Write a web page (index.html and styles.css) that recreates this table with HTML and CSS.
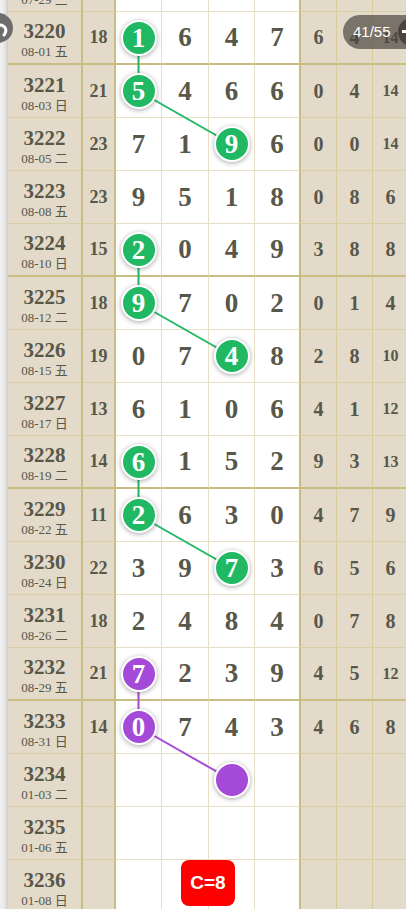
FILE: index.html
```html
<!DOCTYPE html>
<html lang="zh">
<head>
    <meta charset="UTF-8">
    <meta name="viewport" content="width=device-width, initial-scale=1.0">
    <title>走势图</title>
    <link rel="stylesheet" href="styles.css">
</head>
<body>
<div class="page">
    <div class="board" id="board">
        <svg class="links" id="links"></svg>
    </div>

    <div class="nav-back">
        <svg viewBox="0 0 30 30" width="30" height="30">
            <circle cx="15" cy="15" r="15" fill="#6d6d6d"/>
            <path d="M16 12 C 22 12, 25 17, 21 22" fill="none" stroke="#fff" stroke-width="3" stroke-linecap="round"/>
        </svg>
    </div>

    <div class="counter">
        <span>41/55</span>
        <i class="counter-close"></i>
    </div>

    <div class="badge">C=8</div>
</div>

<script>
    // draw data
    const rows = [
        { no: '3219', date: '07-29 三', sum: '16', nums: [3, 5, 2, 6], stats: [1, 3, 12] },
        { no: '3220', date: '08-01 五', sum: '18', nums: [1, 6, 4, 7], stats: [6, 4, 14], ball: 0, g: 1, split: true },
        { no: '3221', date: '08-03 日', sum: '21', nums: [5, 4, 6, 6], stats: [0, 4, 14], ball: 0, g: 1 },
        { no: '3222', date: '08-05 二', sum: '23', nums: [7, 1, 9, 6], stats: [0, 0, 14], ball: 2, g: 1 },
        { no: '3223', date: '08-08 五', sum: '23', nums: [9, 5, 1, 8], stats: [0, 8, 6] },
        { no: '3224', date: '08-10 日', sum: '15', nums: [2, 0, 4, 9], stats: [3, 8, 8], ball: 0, g: 2, split: true },
        { no: '3225', date: '08-12 二', sum: '18', nums: [9, 7, 0, 2], stats: [0, 1, 4], ball: 0, g: 2 },
        { no: '3226', date: '08-15 五', sum: '19', nums: [0, 7, 4, 8], stats: [2, 8, 10], ball: 2, g: 2 },
        { no: '3227', date: '08-17 日', sum: '13', nums: [6, 1, 0, 6], stats: [4, 1, 12] },
        { no: '3228', date: '08-19 二', sum: '14', nums: [6, 1, 5, 2], stats: [9, 3, 13], ball: 0, g: 3, split: true },
        { no: '3229', date: '08-22 五', sum: '11', nums: [2, 6, 3, 0], stats: [4, 7, 9], ball: 0, g: 3 },
        { no: '3230', date: '08-24 日', sum: '22', nums: [3, 9, 7, 3], stats: [6, 5, 6], ball: 2, g: 3 },
        { no: '3231', date: '08-26 二', sum: '18', nums: [2, 4, 8, 4], stats: [0, 7, 8] },
        { no: '3232', date: '08-29 五', sum: '21', nums: [7, 2, 3, 9], stats: [4, 5, 12], ball: 0, g: 4, purple: true, split: true },
        { no: '3233', date: '08-31 日', sum: '14', nums: [0, 7, 4, 3], stats: [4, 6, 8], ball: 0, g: 4, purple: true },
        { no: '3234', date: '01-03 二', ball: 2, g: 4, purple: true },
        { no: '3235', date: '01-06 五' },
        { no: '3236', date: '01-08 日' }
    ];

    const board = document.getElementById('board');

    rows.forEach(r => {
        const row = document.createElement('div');
        row.className = 'row' + (r.split ? ' split' : '');
        let html = `<div class="cell c-issue"><b>${r.no}</b><small>${r.date}</small></div>`;
        html += `<div class="cell c-sum">${r.sum || ''}</div>`;
        for (let i = 0; i < 4; i++) {
            const n = r.nums ? r.nums[i] : '';
            if (r.ball === i) {
                html += `<div class="cell c-num"><span class="ball${r.purple ? ' purple' : ''}" data-g="${r.g}">${n}</span></div>`;
            } else {
                html += `<div class="cell c-num">${n}</div>`;
            }
        }
        for (let i = 0; i < 3; i++) {
            const s = r.stats ? r.stats[i] : '';
            html += `<div class="cell c-stat${s >= 10 ? ' two' : ''}">${s}</div>`;
        }
        row.innerHTML = html;
        board.appendChild(row);
    });

    // connect balls of the same group
    const svg = document.getElementById('links');
    const box = board.getBoundingClientRect();
    const groups = {};
    document.querySelectorAll('.ball').forEach(b => {
        (groups[b.dataset.g] = groups[b.dataset.g] || []).push(b);
    });
    Object.values(groups).forEach(list => {
        for (let i = 1; i < list.length; i++) {
            const a = list[i - 1].getBoundingClientRect();
            const b = list[i].getBoundingClientRect();
            const line = document.createElementNS('http://www.w3.org/2000/svg', 'line');
            line.setAttribute('x1', a.left + a.width / 2 - box.left);
            line.setAttribute('y1', a.top + a.height / 2 - box.top);
            line.setAttribute('x2', b.left + b.width / 2 - box.left);
            line.setAttribute('y2', b.top + b.height / 2 - box.top);
            line.setAttribute('class', list[i].classList.contains('purple') ? 'purple' : '');
            svg.appendChild(line);
        }
    });
</script>
</body>
</html>
```

FILE: styles.css
```css
body {
    margin: 0;
    background-color: #efefef;
    font-family: "Liberation Serif", "Noto Sans CJK SC", serif;
    color: #57574a;
    overflow: hidden;
}

.page {
    position: relative;
    height: 909px;
    overflow: hidden;
}

.board {
    position: relative;
    width: 401px;
    margin: -41px 0 0 8px;
    background-color: #e3dac9;
    box-shadow: 0 0 6px rgba(0, 0, 0, 0.3);
}

.row {
    display: grid;
    grid-template-columns: 75px 33px 46px 47px 46px 46px 36px 36px 36px;
    height: 53px;
}

.cell {
    box-sizing: border-box;
    display: flex;
    align-items: center;
    justify-content: center;
    border-bottom: 1px solid #d8cfa6;
    font-weight: bold;
}

.row.split .cell {
    border-bottom: 2px solid #c9bd84;
}

.c-issue {
    flex-direction: column;
    padding-top: 7px;
    border-right: 2px solid #c9bd84;
}

.c-issue b {
    font-size: 21px;
    line-height: 22px;
}

.c-issue small {
    font-size: 13px;
    line-height: 20px;
    font-weight: normal;
}

.c-sum {
    font-size: 18px;
    border-right: 2px solid #c9bd84;
}

.c-num {
    background-color: #ffffff;
    font-size: 27px;
    border-right: 1px solid #e6dfc4;
    border-bottom-color: #e6dfc4;
}

.c-num:nth-child(6) {
    border-right: 2px solid #c9bd84;
}

.c-stat {
    font-size: 20px;
    border-right: 1px solid #d8cc9a;
}

.c-stat.two {
    font-size: 16px;
}

.ball {
    position: relative;
    z-index: 2;
    box-sizing: border-box;
    width: 36px;
    height: 36px;
    border-radius: 50%;
    border: 2px solid #ffffff;
    background-color: #21b864;
    color: #ffffff;
    font-size: 27px;
    line-height: 32px;
    text-align: center;
    box-shadow: 0 1px 5px rgba(0, 0, 0, 0.35);
}

.ball.purple {
    background-color: #a449d8;
}

.links {
    position: absolute;
    left: 0;
    top: 0;
    width: 100%;
    height: 100%;
    z-index: 1;
    pointer-events: none;
}

.links line {
    stroke: #21b864;
    stroke-width: 2;
}

.links line.purple {
    stroke: #a449d8;
}

.nav-back {
    position: absolute;
    left: -17px;
    top: 13px;
    width: 30px;
    height: 30px;
}

.counter {
    position: absolute;
    left: 343px;
    top: 15px;
    width: 90px;
    height: 34px;
    border-radius: 17px;
    background-color: rgba(72, 66, 60, 0.68);
    color: #ffffff;
    font-family: "Liberation Sans", Arial, sans-serif;
    font-size: 15px;
    line-height: 34px;
}

.counter span {
    padding-left: 10px;
}

.counter-close {
    position: absolute;
    left: 55px;
    top: 3px;
    width: 28px;
    height: 28px;
    border-radius: 50%;
    background-color: rgba(40, 36, 32, 0.6);
}

.counter-close::before {
    content: "";
    position: absolute;
    left: 4px;
    top: 12px;
    width: 12px;
    height: 3px;
    background-color: #ffffff;
}

.badge {
    position: absolute;
    left: 181px;
    top: 860px;
    width: 54px;
    height: 46px;
    border-radius: 8px;
    background-color: #ff0000;
    color: #ffffff;
    font-family: "Liberation Sans", Arial, sans-serif;
    font-size: 19px;
    font-weight: bold;
    display: flex;
    align-items: center;
    justify-content: center;
}
```
